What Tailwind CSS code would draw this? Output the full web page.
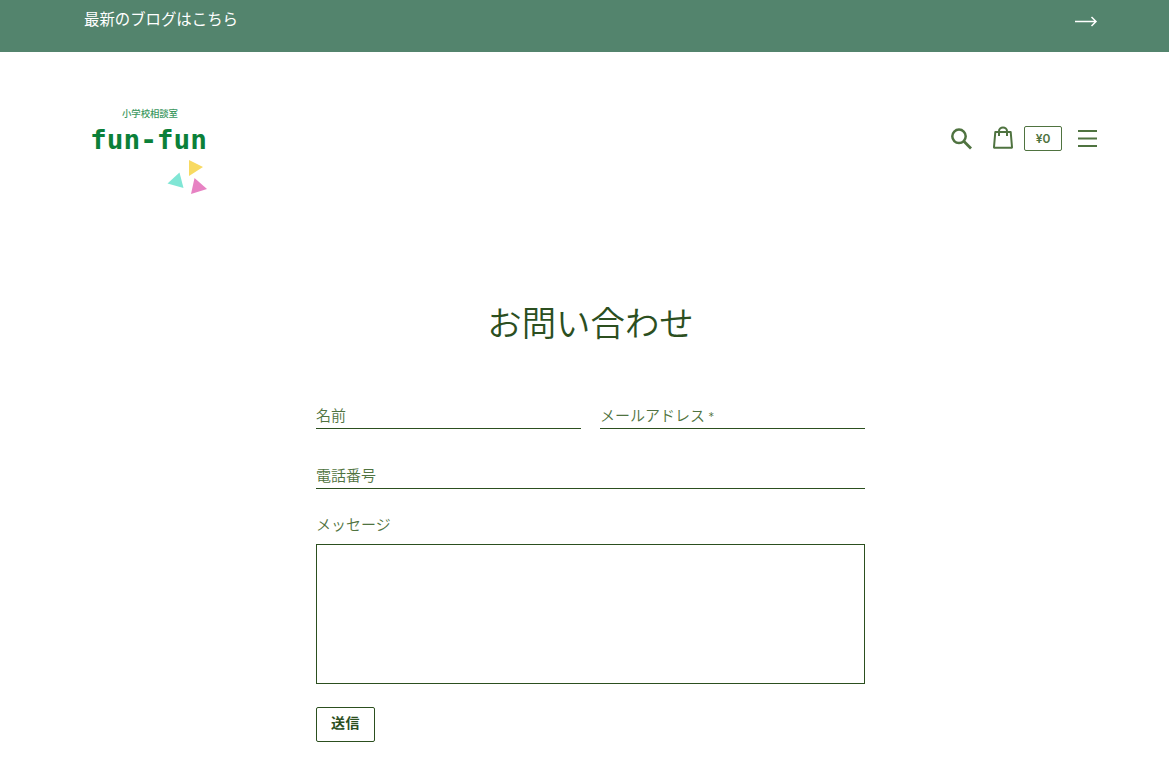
<!DOCTYPE html>
<html lang="ja">
<head>
  <meta charset="UTF-8" />
  <title>お問い合わせ</title>
  <script src="https://cdn.jsdelivr.net/npm/@tailwindcss/browser@4"></script>
</head>
<body class="bg-white text-[#2c4f1f] font-['Noto_Sans_CJK_JP',sans-serif] h-screen overflow-hidden">
  <!-- Announcement bar -->
  <a href="#" class="flex justify-between bg-[#53846d] text-white h-[52px] pl-[84px] pr-[71px] pt-1.5">
    <span class="text-[15.4px] leading-6">最新のブログはこちら</span>
    <svg class="w-6 h-3 mt-[9px]" viewBox="0 0 24 12" fill="none" stroke="currentColor" stroke-width="1.5">
      <path d="M1 6.5h21M17.5 2l4.5 4.5-4.5 4.5" />
    </svg>
  </a>

  <!-- Header -->
  <header class="flex justify-between h-[246px] pl-[84px] pr-[71px]">
    <a href="#" class="block w-[131px] pt-[54px] text-[#0b8039]">
      <svg class="w-[131px] h-[100px]" viewBox="84 106 131 100">
        <text x="122" y="117" font-size="9.4" textLength="56" fill="#3b9860" class="font-['Noto_Sans_CJK_JP',sans-serif] font-medium">小学校相談室</text>
        <text x="90" y="149" font-size="26.500" textLength="117" lengthAdjust="spacingAndGlyphs" fill="#0b8039" class="font-['DejaVu_Sans_Mono',monospace] font-bold">fun-fun</text>
        <path d="M189 160l14 7-14 9z" fill="#f8da62" />
        <path d="M179.500 172.500l4 15.500-16-4.500z" fill="#80e6d5" />
        <path d="M194.500 178l12.500 11-16 5z" fill="#e782c3" />
      </svg>
    </a>

    <!-- Controls -->
    <div class="flex items-center h-[50px] mt-[61px] text-[#4f7340]">
      <button class="w-6 h-6">
        <svg class="w-6 h-6" viewBox="0 0 24 24" fill="none" stroke="currentColor" stroke-width="2.500">
          <circle cx="9" cy="10.300" r="6.700" />
          <path d="M13.800 15.200l7.200 7.200" stroke-width="2.800" />
        </svg>
      </button>
      <button class="w-6 h-6 ml-[17px]">
        <svg class="w-6 h-6" viewBox="0 0 24 24" fill="none" stroke="currentColor" stroke-width="2" stroke-linejoin="round">
          <path d="M4.300 6h15.400l1.300 15q.1.800-.7.800H3.700q-.8 0-.7-.8z" />
          <path d="M8 10V5a4 3.500 0 0 1 8 0v5" />
        </svg>
      </button>
      <span class="flex items-center justify-center w-[38px] h-[25px] ml-[9px] pt-0.5 border border-current rounded-[2px] text-[12px] font-['Inter',sans-serif] font-semibold">¥0</span>
      <button class="w-[19px] h-[18px] ml-4 mr-px">
        <svg class="w-[19px] h-[18px]" viewBox="0 0 19 18" stroke="currentColor" stroke-width="2">
          <path d="M0 2h19M0 9.500h19M0 17h19" />
        </svg>
      </button>
    </div>
  </header>

  <!-- Contact form -->
  <main class="w-[549px] ml-[316px]">
    <h1 class="-mt-0.5 text-center text-[34.4px] leading-[50px] font-[350]">お問い合わせ</h1>
    <form class="mt-[57px] text-[15px] font-[350] text-[#4f7340]">
      <div class="grid grid-cols-2 gap-[19px]">
        <label class="h-[26px] leading-6 border-b border-[#2c4f1f]">名前</label>
        <label class="h-[26px] leading-6 border-b border-[#2c4f1f]">メールアドレス <span class="text-[12px] font-['Inter',sans-serif] leading-none">*</span></label>
      </div>
      <label class="block h-[26px] mt-[34px] leading-6 border-b border-[#2c4f1f]">電話番号</label>
      <label class="block h-6 mt-[23px] leading-6">メッセージ</label>
      <textarea class="block w-full h-[140px] mt-2 border border-[#2c4f1f] resize-none"></textarea>
      <button type="button" class="block w-[59px] h-[35px] mt-[23px] pb-1 border border-[#2c4f1f] rounded-[2px] text-[14px] tracking-[0.5px] font-bold text-[#2c4f1f]">送信</button>
    </form>
  </main>
</body>
</html>
